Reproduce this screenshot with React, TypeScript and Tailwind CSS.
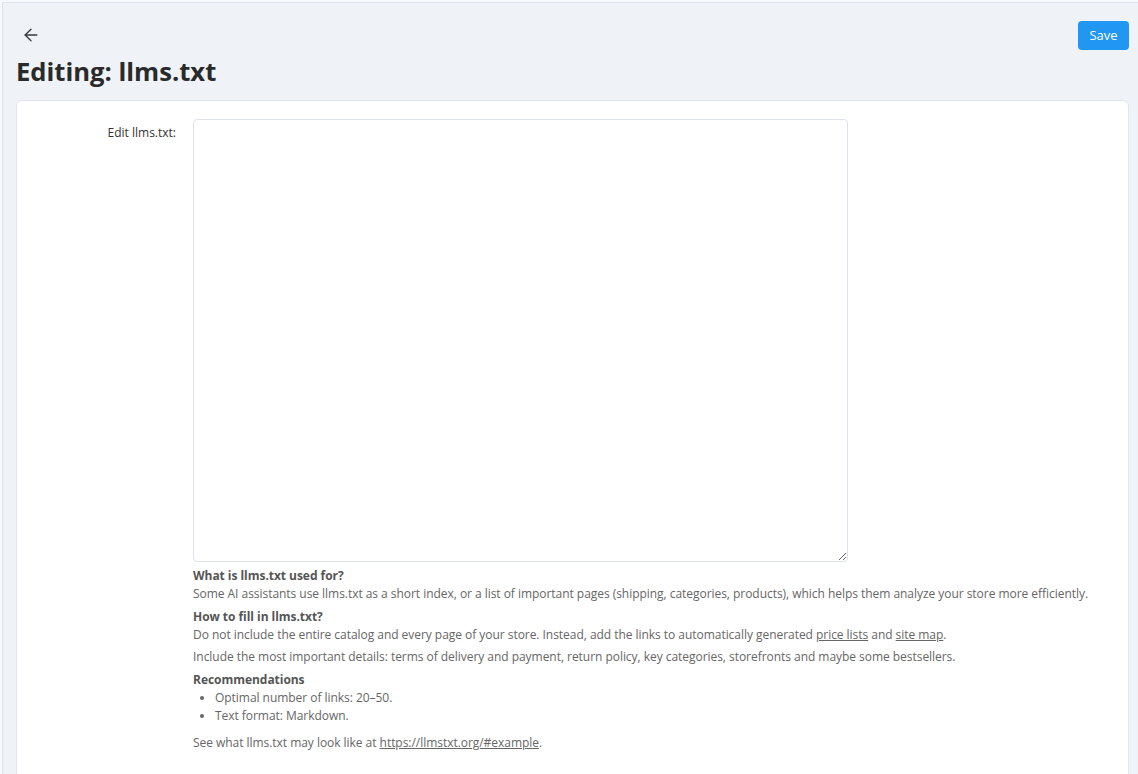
import { ArrowLeft } from 'lucide-react'

const FONT = { fontFamily: '"Open Sans", "Noto Sans", Arial, sans-serif' }

export default function App() {
  return (
    <div className="h-[774px] overflow-hidden bg-[#f7f9fc] pl-[2px] pt-[2px]" style={FONT}>
      <div className="h-full border-l border-t border-[#dde3ec] bg-[#eff3f8] pl-[13px] pr-[9px]">
        <div className="flex items-start justify-between pt-[18px]">
          <button className="ml-[5px] mt-[4px] text-[#3a3a3a]">
            <ArrowLeft className="h-[20px] w-[20px]" strokeWidth={1.6} />
          </button>
          <button className="h-[29px] w-[51px] rounded-[4px] bg-[#2196f3] text-[13px] text-white">
            Save
          </button>
        </div>
        <h1 className="mt-[5px] text-[25.6px] font-bold leading-[34px] text-[#2a2a2a]">
          Editing: llms.txt
        </h1>
        <div className="mt-[11px] h-[700px] rounded-[6px] border border-[#e0e5ed] bg-white pt-[18px]">
          <div className="flex">
            <label className="w-[159px] shrink-0 pt-[5px] text-right text-[12px] text-[#333]">
              Edit llms.txt:
            </label>
            <div className="ml-[17px] flex-1">
              <textarea className="block h-[443px] w-[655px] resize-y rounded-[4px] border border-[#dde1e8] outline-none" />
              <div className="mt-[5px] text-[12px] leading-[18px] tracking-[-0.04px] text-[#666]">
                <p className="font-bold text-[#555]">What is llms.txt used for?</p>
                <p>
                  Some AI assistants use llms.txt as a short index, or a list of important pages (shipping, categories, products), which helps them analyze your store more efficiently.
                </p>
                <p className="mt-[5px] font-bold text-[#555]">How to fill in llms.txt?</p>
                <p>
                  Do not include the entire catalog and every page of your store. Instead, add the links to automatically generated{' '}
                  <a className="underline">price lists</a> and <a className="underline">site map</a>.
                </p>
                <p className="mt-[4px]">
                  Include the most important details: terms of delivery and payment, return policy, key categories, storefronts and maybe some bestsellers.
                </p>
                <p className="mt-[5px] font-bold text-[#555]">Recommendations</p>
                <ul className="list-disc pl-[22px]">
                  <li>Optimal number of links: 20–50.</li>
                  <li>Text format: Markdown.</li>
                </ul>
                <p className="mt-[9px]">
                  See what llms.txt may look like at <a className="underline">https://llmstxt.org/#example</a>.
                </p>
              </div>
            </div>
          </div>
        </div>
      </div>
    </div>
  )
}
